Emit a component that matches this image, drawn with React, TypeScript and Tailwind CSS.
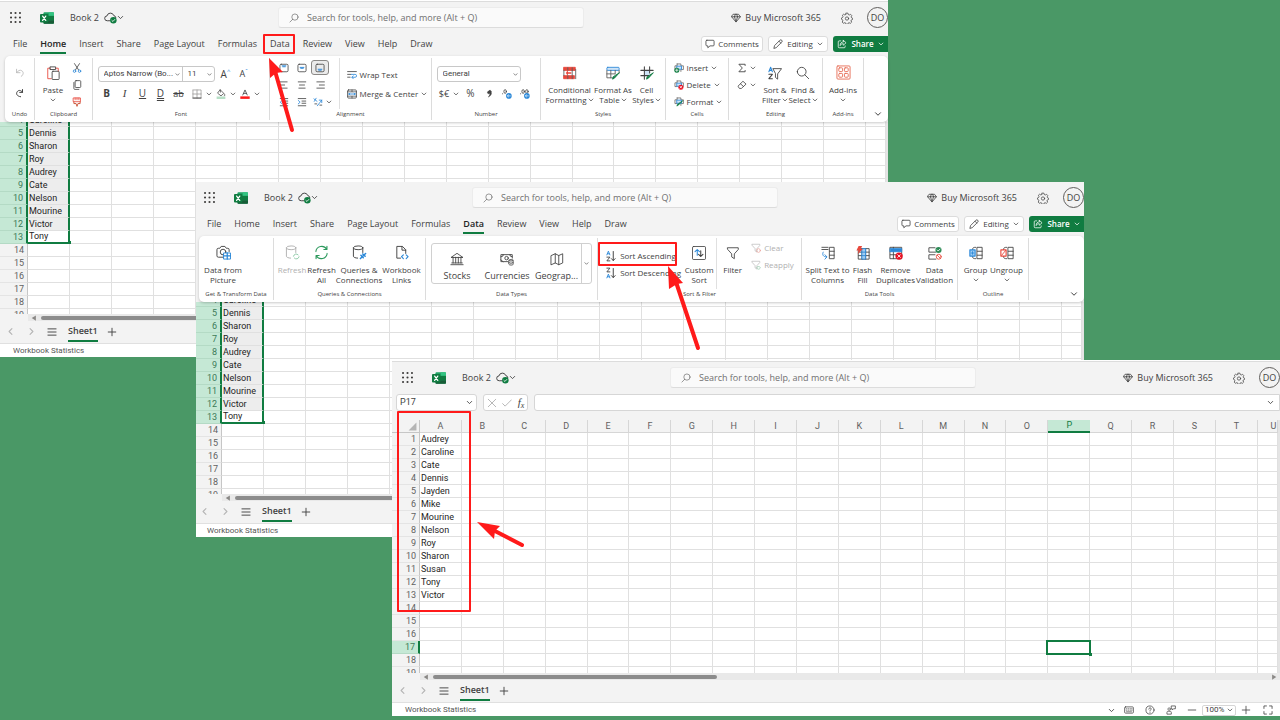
import type { ReactNode } from 'react';

type Props = { children?: ReactNode; className?: string };

/* ---------- icons ---------- */

function Svg({ children, className = 'w-[14px] h-[14px]' }: Props) {
  return (
    <svg
      viewBox="0 0 16 16"
      className={`shrink-0 ${className}`}
      fill="none"
      stroke="currentColor"
      strokeWidth="1"
      strokeLinecap="round"
      strokeLinejoin="round"
      aria-hidden="true"
    >
      {children}
    </svg>
  );
}

const SM = 'w-[10px] h-[10px]';
const MD = 'w-[12px] h-[12px]';
const BLUE = '#2b88d8';
const GREEN = '#107c41';
const RED = '#e8483c';

const Chevron = ({ className = 'w-[6px] h-[6px]' }: Props) => (
  <Svg className={className}>
    <path d="M3 5.5l5 5 5-5" strokeWidth="2" />
  </Svg>
);

const Launcher = () => (
  <Svg className="w-[13px] h-[13px]">
    {[2.5, 8, 13.5].map((y) =>
      [2.5, 8, 13.5].map((x) => <circle key={`${x}-${y}`} cx={x} cy={y} r="1.3" fill="#3b3a39" stroke="none" />)
    )}
  </Svg>
);

const ExcelLogo = () => (
  <Svg className="w-[14px] h-[14px]">
    <g stroke="none">
      <rect x="4" y="1.5" width="12" height="13" rx="1" fill="#21a366" />
      <path d="M4 5.5h12v5H4z" fill="#107c41" />
      <path d="M4 10.5h12v3a1 1 0 01-1 1H5a1 1 0 01-1-1z" fill="#185c37" />
      <path d="M10 1.5h5a1 1 0 011 1v3h-6z" fill="#33c481" />
      <rect x="0" y="3.5" width="9.5" height="9.5" rx="1" fill="#107c41" />
    </g>
    <path d="M3 5.8l3.6 5M6.6 5.8L3 10.8" stroke="#fff" strokeWidth="1.4" />
  </Svg>
);

const Cloud = () => (
  <Svg className="w-[13px] h-[13px]">
    <path d="M7 12H4a3 3 0 01-.3-6 4.3 4.3 0 018.3-.4 3 3 0 012.6 2.6" strokeWidth="1.2" />
    <circle cx="11.5" cy="11.5" r="4" fill={GREEN} stroke="none" />
    <path d="M9.7 11.6l1.3 1.3 2.3-2.5" stroke="#fff" />
  </Svg>
);

const SearchIcon = ({ className = SM }: Props) => (
  <Svg className={className}>
    <circle cx="9.5" cy="6.5" r="5" />
    <path d="M6 10l-4.5 4.5" />
  </Svg>
);

const Diamond = () => (
  <Svg className={SM}>
    <path d="M4 2h8l3 4-7 8.5L1 6zM1 6h14M5.5 6L8 14l2.5-8M5.5 6L7 2M10.5 6L9 2" strokeWidth="1.3" />
  </Svg>
);

const Gear = () => (
  <Svg className={MD}>
    <path d="M6.8 1.5h2.4l.5 1.9 1.3.6 1.8-.9 1.6 1.7-.9 1.7.5 1.2 1.5.6v1.6l-1.7.7-.5 1.2.9 1.7-1.6 1.6-1.8-.8-1.3.5-.5 1.7H6.8l-.5-1.8-1.3-.5-1.8.9-1.6-1.7.9-1.7L2 10.3l-1.5-.7V8l1.700-.7.5-1.200-.9-1.700L3.300 3l1.800.9 1.200-.5z" />
    <circle cx="8" cy="8.7" r="2.2" />
  </Svg>
);

const CommentIcon = () => (
  <Svg className={SM}>
    <path d="M3 2h10a1.5 1.5 0 011.5 1.5v6A1.5 1.5 0 0113 11H8l-3.5 3v-3H3a1.5 1.5 0 01-1.5-1.5v-6A1.5 1.5 0 013 2z" strokeWidth="1.3" />
  </Svg>
);

const Pencil = () => (
  <Svg className={SM}>
    <path d="M1.5 14.5l1-4 8.5-8.5a2 2 0 013 3l-8.5 8.5zM9.5 3.5l3 3" strokeWidth="1.3" />
  </Svg>
);

const ShareIcon = () => (
  <Svg className={SM}>
    <path d="M6 3H3.5A1.5 1.5 0 002 4.5v8A1.5 1.5 0 003.5 14h8a1.5 1.5 0 001.5-1.5V11M10 2l4.5 4L10 10V7.5C7.5 7.5 6 8.5 5 10.5c0-3.5 2-6 5-6z" strokeWidth="1.2" />
  </Svg>
);

const Undo = () => (
  <Svg className={SM}>
    <path d="M2.5 2v5.5H8M2.5 7.5C5 4 8 2.5 11 4.5s3 6-1 9" strokeWidth="1.3" />
  </Svg>
);

const Redo = () => (
  <Svg className={SM}>
    <path d="M12 2.5V7H7.5M12 7C9.5 3 5.5 3 3.5 6s-1 7 5.5 8" strokeWidth="1.6" />
  </Svg>
);

const Clipboard = () => (
  <Svg>
    <path d="M5 2.5H2v12h4M11 2.5h3V6" stroke={RED} />
    <path d="M5 1h6v3H5z" />
    <rect x="7" y="6" width="8" height="9.5" rx="1" />
  </Svg>
);

const Cut = () => (
  <Svg className={SM}>
    <path d="M4 1l6.5 10M12 1L5.5 11" strokeWidth="1.3" />
    <circle cx="4" cy="13" r="2" stroke={BLUE} strokeWidth="1.3" />
    <circle cx="12" cy="13" r="2" stroke={BLUE} strokeWidth="1.3" />
  </Svg>
);

const Copy = () => (
  <Svg className={SM}>
    <rect x="5" y="1" width="9" height="11" rx="1.5" strokeWidth="1.3" />
    <path d="M3 4v9.5A1.5 1.5 0 004.5 15H11" strokeWidth="1.3" />
  </Svg>
);

const Painter = () => (
  <Svg className={SM}>
    <path d="M2.5 1.5h11v6h-11zM5 1.5v3M8 1.5v3M11 1.5v3" stroke={RED} strokeWidth="1.3" />
    <path d="M3 8v2.5h3.5L8 15l1.5-4.5H13V8" stroke="#c43e1c" strokeWidth="1.3" />
  </Svg>
);

const VAlign = ({ at }: { at: number }) => (
  <Svg className={SM}>
    <rect x="1.5" y="2" width="13" height="12" rx="2" strokeWidth="1.3" />
    <path d={`M5 ${at}h6M6 ${at + 1.5}h4`} stroke={BLUE} strokeWidth="1.5" />
  </Svg>
);

const HAlign = ({ d }: { d: string }) => (
  <Svg className={SM}>
    <path d={d} strokeWidth="1.3" />
  </Svg>
);

const Indent = ({ d }: { d: string }) => (
  <Svg className={SM}>
    <path d="M2 2.5h12M8 6.5h6M8 10h6M2 14h12" strokeWidth="1.3" />
    <path d={d} stroke={BLUE} strokeWidth="1.3" />
  </Svg>
);

const Orient = () => (
  <Svg className={SM}>
    <path d="M1.5 3l5 4M5 2L2 7M7 14L14 5M14 9V5h-4" stroke={BLUE} strokeWidth="1.3" />
    <path d="M3 11h3M11 13h3" strokeWidth="1.3" />
  </Svg>
);

const Wrap = () => (
  <Svg className={SM}>
    <path d="M1 2.5h14M1 7h5M1 11.5h4" strokeWidth="1.3" />
    <path d="M7 7h6a2.3 2.3 0 010 4.6H8M10 9.5l-2.2 2.1L10 14" stroke={BLUE} strokeWidth="1.3" />
  </Svg>
);

const Merge = () => (
  <Svg className={SM}>
    <rect x="1" y="1.5" width="14" height="13" rx="1.5" strokeWidth="1.3" />
    <path d="M1 4.5h14M1 11.5h14M8 1.5v3M8 11.5v3" strokeWidth="1.1" />
    <path d="M2.5 8h11M4.5 6.5L3 8l1.5 1.5M11.5 6.5L13 8l-1.5 1.5" stroke={BLUE} strokeWidth="1.4" />
  </Svg>
);

const GridBorders = () => (
  <Svg className={SM}>
    <path d="M1.5 1.5h13v13h-13zM8 1.5v13M1.5 8h13" stroke="#8a8886" strokeDasharray="1.5 1" />
    <path d="M1.5 14.5h13" strokeWidth="1.3" />
  </Svg>
);

const Bucket = () => (
  <Svg className={SM}>
    <path d="M7 1.5l5.5 5.5-4.5 4-5-4zM7 1.5V5M13.5 8c1 1.5 1 3-.3 3" strokeWidth="1.2" />
    <path d="M1 14h14" stroke="#b7dfc6" strokeWidth="4" strokeLinecap="butt" />
  </Svg>
);

const FontColor = () => (
  <Svg className={SM}>
    <path d="M4.5 9.5L8 1.5l3.5 8M5.7 7h4.6" strokeWidth="1.3" />
    <path d="M0.5 13.8h15" stroke="#ff1a1a" strokeWidth="4" strokeLinecap="butt" />
  </Svg>
);

const Decimals = ({ wide }: { wide?: boolean }) => (
  <Svg className={SM}>
    <ellipse cx="5" cy="4" rx="2" ry="3" strokeWidth="1.3" />
    {wide && <ellipse cx="11" cy="4" rx="2" ry="3" strokeWidth="1.3" />}
    <circle cx="1" cy="7.5" r=".8" fill="currentColor" stroke="none" />
    <circle cx="11" cy="11" r="4.5" fill={BLUE} stroke="none" />
    <path d="M8.7 11h4.6M10.5 9.3L8.7 11l1.8 1.7" stroke="#fff" />
  </Svg>
);

const CondFormat = () => (
  <Svg>
    <path d="M1 1.500h13v3.500H1zM1 11h12v3.500H1z" fill={RED} stroke={RED} />
    <path d="M1 5v6M5.500 2v3M10.500 2v3M5.500 11v3.500M10.500 5v9.500M14.500 4v10.500" stroke="#605e5c" />
    <path d="M4 8h5M5 6.500v3" stroke={RED} strokeWidth="1.500" />
  </Svg>
);

const FormatTable = () => (
  <Svg>
    <rect x="1" y="1.5" width="14" height="3.5" rx="1" stroke={BLUE} fill="#cfe4f7" />
    <path d="M1 5v8.5h6M1 9h9M5.5 5v8.5M10.5 5v4M15 5v3" stroke="#605e5c" />
    <path d="M15 8l-5.5 6-2 1 .5-2.2z" stroke={GREEN} fill={GREEN} />
  </Svg>
);

const CellStyles = () => (
  <Svg>
    <path d="M5 5h6v6H5z" fill="#cfe4f7" stroke="none" />
    <path d="M5 1v14M11 1v7M1 5h14M1 11h9" strokeWidth="1.2" />
    <path d="M15 8l-5.5 6-2 1 .5-2.2z" stroke={GREEN} fill={GREEN} />
  </Svg>
);

const CellsIcon = ({ kind }: { kind: 'insert' | 'delete' | 'format' }) => (
  <Svg className={SM}>
    <path d="M5 1.5v3H1.5v6H5M5 1.5h6v3h4v6h-4v3" stroke="#605e5c" strokeWidth="1.2" />
    <path d="M5 5h7v5H5z" stroke={BLUE} fill="#cfe4f7" strokeWidth="1.4" />
    {kind === 'insert' && (
      <>
        <circle cx="4.5" cy="11.5" r="4" fill={GREEN} stroke="none" />
        <path d="M4.5 9.5v4M2.5 11.5h4" stroke="#fff" strokeWidth="1.2" />
      </>
    )}
    {kind === 'delete' && (
      <>
        <circle cx="11" cy="11.5" r="4" fill="#e81123" stroke="none" />
        <path d="M9.5 10l3 3M12.5 10l-3 3" stroke="#fff" strokeWidth="1.2" />
      </>
    )}
    {kind === 'format' && <path d="M14 6l-7 7-2.5 1.5L5.5 12z" fill={GREEN} stroke={GREEN} />}
  </Svg>
);

const Sigma = () => (
  <Svg className={SM}>
    <path d="M13 4V2H3l5.5 6L3 14h10v-2" strokeWidth="1.4" />
  </Svg>
);

const Eraser = () => (
  <Svg className={SM}>
    <path d="M2 9.5L9.5 2l5 4.5-7.5 7H4.5zM5.5 6l5 4.5" strokeWidth="1.3" />
  </Svg>
);

const LetterA = ({ x, y }: { x: number; y: number }) => (
  <path d={`M${x} ${y + 5}l2-5 2 5M${x + 0.8} ${y + 3.5}h2.4`} stroke={BLUE} strokeWidth="1.2" />
);
const LetterZ = ({ x, y }: { x: number; y: number }) => (
  <path d={`M${x} ${y}h4l-4 5h4`} strokeWidth="1.2" />
);

const SortFilter = () => (
  <Svg>
    <LetterA x={1} y={1.5} />
    <LetterZ x={1} y={9.5} />
    <path d="M6 3h9.5L11 9v6l-2.5-2V9z" />
  </Svg>
);

const SortIcon = ({ desc }: { desc?: boolean }) => (
  <Svg className={MD}>
    {desc ? <LetterZ x={2.5} y={1.5} /> : <LetterA x={2.5} y={1.5} />}
    {desc ? <LetterA x={2.5} y={9.5} /> : <LetterZ x={2.5} y={9.5} />}
    <path d="M11 2v12M8.5 11.5L11 14l2.5-2.5" strokeWidth="1.3" />
  </Svg>
);

const AddIns = () => (
  <Svg className="w-[15px] h-[15px]">
    <g stroke="#e8705a">
      <rect x="1" y="1" width="14" height="14" rx="1" />
      <rect x="3" y="3" width="4" height="4" rx=".8" />
      <rect x="9" y="3" width="4" height="4" rx=".8" />
      <rect x="3" y="9" width="4" height="4" rx=".8" />
      <rect x="9" y="9" width="4" height="4" rx=".8" />
    </g>
  </Svg>
);

const Camera = () => (
  <Svg className="w-[15px] h-[15px]">
    <path d="M8 13H2.5A1.5 1.5 0 011 11.5V5a1.5 1.5 0 011.5-1.5H4L5.5 1.5h4l1.5 2h1.5A1.5 1.5 0 0114 5v2" />
    <circle cx="7.5" cy="7.5" r="3" />
    <path d="M8.5 8.5h7v6.5h-7z" fill="#fff" stroke={BLUE} />
    <path d="M8.5 11.5h7M12 8.5V15" stroke={BLUE} strokeWidth="1.3" />
  </Svg>
);

const Database = ({ children }: Props) => (
  <Svg className="w-[15px] h-[15px]">
    <ellipse cx="6.5" cy="3" rx="5" ry="2" />
    <path d="M1.5 3v9c0 1 2 2 4.5 2M11.5 3v5" />
    {children}
  </Svg>
);

const RefreshAll = () => (
  <Svg className="w-[15px] h-[15px]">
    <path d="M2 7a6.2 6.2 0 0111.5-2.5M13.8 1.5v3.3h-3.3M14 9A6.2 6.2 0 012.5 11.5M2.2 14.5v-3.3h3.3" stroke="#2e9a5e" strokeWidth="1.2" />
  </Svg>
);

const FileLink = () => (
  <Svg className="w-[15px] h-[15px]">
    <path d="M7 14H3V1.5h6L12.5 5v4M8.500 1.500V5.500h4" />
    <path d="M10 10.5L8 12.5l2 2M13 10.5l2 2-2 2" stroke={BLUE} strokeWidth="1.2" />
  </Svg>
);

const Bank = () => (
  <Svg>
    <path d="M1.5 6L8 1.5 14.5 6zM1 14.5h14M2 12.5h12M3.5 6v6.5M6.5 6v6.5M9.5 6v6.5M12.5 6v6.5" />
  </Svg>
);

const Money = () => (
  <Svg>
    <path d="M9 11H1V3h13v4M3.5 3v1.5L1 5.5M11.5 3v1.5l2.5 1M1 9l2.5 2" />
    <circle cx="7.5" cy="7" r="2" />
    <path d="M10 9.5c0-1.3 5-1.3 5 0v4.5c0 1.3-5 1.3-5 0zM10 9.5c0 1.2 5 1.2 5 0M10 12c0 1.2 5 1.2 5 0" fill="#fff" />
  </Svg>
);

const MapIcon = () => (
  <Svg>
    <path d="M1.5 4l4.5-2 4 2 4.5-2v10.5L10 14.5l-4-2-4.5 2zM6 2v10.5M10 4v10.5" />
  </Svg>
);

const CustomSort = () => (
  <Svg>
    <rect x="0.5" y="0.5" width="15" height="15" rx="1.5" />
    <path d="M6 10.5V4M3.5 6.5L6 4l2.5 2.5" stroke={BLUE} strokeWidth="1.2" />
    <path d="M10 5.5V12M7.5 9.5L10 12l2.5-2.5" strokeWidth="1.2" />
  </Svg>
);

const Funnel = ({ className, children }: Props) => (
  <Svg className={className}>
    <path d="M2 2h12v2L9.5 9v5.5L6.5 12.5V9L2 4z" />
    {children}
  </Svg>
);

const SplitText = () => (
  <Svg>
    <path d="M1 1.5h7M1 4h7" />
    <path d="M2.5 7c-1.5 3 0 5.5 4 5.5M4.5 10l2.3 2.5L4.5 15" stroke={BLUE} />
    <path d="M10 1.5h5v13h-5zM10 6h5M10 10.5h5" />
  </Svg>
);

const FlashFill = () => (
  <Svg>
    <path d="M3 3h12v12H3zM3 7h12M3 11h12M7 3v12M11 3v12" />
    <path d="M7 3h4v12H7z" fill="#9fcdf2" stroke={BLUE} />
    <path d="M7 7h4M7 11h4" stroke={BLUE} />
    <path d="M3 0h4L5.5 3H8L2 9l1-4H0.5z" fill={RED} stroke="none" />
  </Svg>
);

const RemoveDup = () => (
  <Svg>
    <path d="M1.5 1.5h13v13h-13zM5 1.5v13M1.5 10h13" />
    <path d="M1.5 3h13v3.5h-13z" fill={BLUE} stroke={BLUE} />
    <circle cx="11.5" cy="11.5" r="4.2" fill="#e81123" stroke="none" />
    <path d="M10 10l3 3M13 10l-3 3" stroke="#fff" />
  </Svg>
);

const Validation = () => (
  <Svg>
    <path d="M8 2H1v5h8M8 10H1v5h8" />
    <circle cx="12" cy="4.5" r="3.5" fill="#2e8b57" stroke="none" />
    <path d="M10.5 4.5l1.2 1.2 2-2.2" stroke="#fff" />
    <circle cx="12.3" cy="12.3" r="2.8" stroke={RED} />
    <path d="M10.5 10.5l3.8 3.8" stroke={RED} />
  </Svg>
);

const GroupIcon = ({ undo }: { undo?: boolean }) => (
  <Svg>
    <path d="M9.5 1.5H15v13H9.5zM9.5 6H15M9.5 10.5H15M7.5 1.5C5 1.5 4 2 4 4M7.5 14.5C5 14.5 4 14 4 12" />
    <rect x="1" y="4.5" width="6" height="7" fill={undo ? '#fff' : '#9fcdf2'} stroke={undo ? RED : BLUE} strokeWidth="1.3" />
    {undo ? <path d="M2 10.5l4.5-5.5" stroke={RED} /> : <path d="M4 6.5v3M2.5 8h3" stroke={BLUE} />}
  </Svg>
);

/* ---------- annotations ---------- */

function Arrow({ className, viewBox, head, shaft }: { className: string; viewBox: string; head: string; shaft: string }) {
  return (
    <svg className={`absolute z-30 pointer-events-none ${className}`} viewBox={viewBox} aria-hidden="true">
      <path d={head} fill="#ff1a1a" />
      <path d={shaft} stroke="#ff1a1a" strokeWidth="4" strokeLinecap="round" fill="none" />
    </svg>
  );
}

const Highlight = ({ className }: Props) => (
  <span className={`absolute z-20 border-2 border-[#ff1a1a] rounded-[1px] pointer-events-none ${className}`} />
);

/* ---------- window chrome ---------- */

function TitleBar() {
  return (
    <header className="flex items-center h-[31px] pl-[9px] text-[9px]">
      <div className="flex items-center w-[269px] shrink-0">
        <button aria-label="App launcher"><Launcher /></button>
        <span className="ml-[18px]"><ExcelLogo /></span>
        <span className="ml-4">Book 2</span>
        <span className="ml-[5px]"><Cloud /></span>
        <Chevron className="w-[7px] h-[7px]" />
      </div>
      <label className="flex flex-1 items-center gap-2 max-w-[306px] h-[21px] px-[10px] rounded-[3px] bg-[#fafafa] border border-[#ececec] border-b-[#dcdcdc] text-[#616161]">
        <SearchIcon />
        <input
          aria-label="Search"
          placeholder="Search for tools, help, and more (Alt + Q)"
          className="flex-1 min-w-0 bg-transparent outline-none placeholder:text-[#707070]"
        />
      </label>
      <div className="flex items-center ml-auto pl-4 shrink-0">
        <button className="flex items-center gap-1 whitespace-nowrap"><Diamond /> Buy Microsoft 365</button>
        <button aria-label="Settings" className="ml-5"><Gear /></button>
        <button className="ml-[14px] w-[21px] h-[21px] rounded-full border border-[#605e5c] flex items-center justify-center shrink-0">
          DO
        </button>
      </div>
    </header>
  );
}

const tabs = ['File', 'Home', 'Insert', 'Share', 'Page Layout', 'Formulas', 'Data', 'Review', 'View', 'Help', 'Draw'];

function TabBar({ active, marked }: { active: string; marked?: string }) {
  return (
    <div className="flex items-center h-[23px] pl-[13px] pb-[2px] text-[9px]">
      <nav className="flex items-center gap-[13px]">
        {tabs.map((tab) => (
          <a
            key={tab}
            href="#"
            className={`relative leading-[16px] whitespace-nowrap ${
              tab === active ? 'font-semibold text-[#242424] border-b-2 border-[#107c41] -mb-[2px]' : ''
            }`}
          >
            {tab}
            {tab === marked && <Highlight className="-left-[7px] -right-[5px] -inset-y-[2px]" />}
          </a>
        ))}
      </nav>
      <div className="flex items-center gap-[5px] ml-auto text-[8px]">
        <button className="flex items-center justify-center gap-[3px] w-[62px] h-[16px] rounded-[3px] bg-white border border-[#dcdcdc]">
          <CommentIcon /> Comments
        </button>
        <button className="flex items-center justify-center gap-1 w-[60px] h-[16px] rounded-[3px] bg-white border border-[#dcdcdc]">
          <Pencil /> Editing <Chevron />
        </button>
        <button className="flex items-center justify-center gap-1 w-[55px] h-[16px] rounded-l-[3px] bg-[#107c41] text-white font-semibold">
          <ShareIcon /> Share <Chevron />
        </button>
      </div>
    </div>
  );
}

function Ribbon({ children }: Props) {
  return (
    <div className="relative z-10 flex h-[66px] ml-[5px] py-[2px] bg-white rounded-[5px] shadow-[0_1px_3px_rgba(0,0,0,0.22)] text-[8px]">
      {children}
      <div className="flex flex-1 items-end justify-end p-[6px] pb-[2px]">
        <button aria-label="Collapse ribbon"><Chevron className="w-[8px] h-[8px]" /></button>
      </div>
    </div>
  );
}

function Group({ label, className, children }: Props & { label: string }) {
  return (
    <section className={`flex flex-col shrink-0 border-r border-[#dcdcdc] ${className}`}>
      <div className="flex h-[51px] justify-center">{children}</div>
      <h2 className="leading-[10px] text-[6px] text-center whitespace-nowrap">{label}</h2>
    </section>
  );
}

type BigProps = { icon: ReactNode; lines: string[]; drop?: boolean; dropBelow?: boolean; className?: string };

function BigButton({ icon, lines, drop, dropBelow, className }: BigProps) {
  return (
    <button className={`flex flex-col items-center justify-start pt-[7px] shrink-0 leading-[10px] whitespace-nowrap ${className}`}>
      <span className="flex items-center justify-center h-[15px] mb-[5px]">{icon}</span>
      {lines.map((line, i) => (
        <span key={line} className="flex items-center gap-px">
          {line}
          {drop && i === lines.length - 1 && <Chevron />}
        </span>
      ))}
      {dropBelow && <span className="flex items-center h-[10px]"><Chevron /></span>}
    </button>
  );
}

function RowButton({ icon, label, drop, className = '' }: { icon: ReactNode; label: string; drop?: boolean; className?: string }) {
  return (
    <button className={`flex items-center gap-[3px] leading-[11px] whitespace-nowrap ${className}`}>
      {icon} {label} {drop && <Chevron />}
    </button>
  );
}

function Picker({ label, value, className }: { label: string; value: string; className: string }) {
  return (
    <label className={`relative flex items-center ${className}`}>
      <select aria-label={label} className="appearance-none w-full h-full pl-[5px] bg-transparent outline-none font-[Roboto,sans-serif]">
        <option>{value}</option>
      </select>
      <Chevron className="absolute right-[2px] w-[5px] h-[5px] pointer-events-none" />
    </label>
  );
}

/* ---------- ribbons ---------- */

const IconBtn = ({ label, children, className = 'w-[18px]' }: Props & { label: string }) => (
  <button aria-label={label} className={`flex items-center justify-center h-[15px] shrink-0 ${className}`}>
    {children}
  </button>
);

function HomeRibbon() {
  return (
    <Ribbon>
      <Group label="Undo" className="w-[30px]">
        <div className="flex flex-col gap-[5px] pt-[7px]">
          <IconBtn label="Undo" className="w-[18px] text-[#b5b5b5]"><Undo /></IconBtn>
          <IconBtn label="Redo"><Redo /></IconBtn>
        </div>
      </Group>

      <Group label="Clipboard" className="w-[58px]">
        <BigButton icon={<Clipboard />} lines={['Paste']} dropBelow className="w-[30px]" />
        <div className="flex flex-col gap-[2px] pt-[2px] mr-[3px]">
          <IconBtn label="Cut"><Cut /></IconBtn>
          <IconBtn label="Copy"><Copy /></IconBtn>
          <IconBtn label="Format painter"><Painter /></IconBtn>
        </div>
      </Group>

      <Group label="Font" className="w-[177px]">
        <div className="flex flex-col gap-[4px] pt-[8px] w-[167px]">
          <div className="flex items-center">
            <div className="flex h-[16px] rounded-[3px] border border-[#c8c8c8]">
              <Picker label="Font name" value="Aptos Narrow (Bo..." className="w-[83px]" />
              <Picker label="Font size" value="11" className="w-[32px] border-l border-[#c8c8c8]" />
            </div>
            <IconBtn label="Grow font" className="w-[18px] ml-[2px] text-[10px]">A<sup className="text-[6px] text-[#2b88d8]">^</sup></IconBtn>
            <IconBtn label="Shrink font" className="w-[18px] text-[9px]">A<sup className="text-[6px] text-[#2b88d8]">ˇ</sup></IconBtn>
          </div>
          <div className="flex items-center text-[10px]">
            <IconBtn label="Bold"><b>B</b></IconBtn>
            <IconBtn label="Italic"><i className="font-['Liberation_Serif',serif] text-[11px]">I</i></IconBtn>
            <IconBtn label="Underline"><u>U</u></IconBtn>
            <IconBtn label="Double underline"><span className="underline decoration-double">D</span></IconBtn>
            <IconBtn label="Strikethrough"><s className="text-[9px]">ab</s></IconBtn>
            <IconBtn label="Borders"><GridBorders /></IconBtn>
            <Chevron />
            <IconBtn label="Fill color"><Bucket /></IconBtn>
            <Chevron />
            <IconBtn label="Font color"><FontColor /></IconBtn>
            <Chevron />
          </div>
        </div>
      </Group>

      <Group label="Alignment" className="w-[162px]">
        <div className="grid grid-cols-3 content-start gap-y-[2px] w-[54px] ml-[4px] pt-[2px] shrink-0">
          <IconBtn label="Top align"><VAlign at={4.5} /></IconBtn>
          <IconBtn label="Middle align"><VAlign at={7} /></IconBtn>
          <IconBtn label="Bottom align" className="w-[18px] rounded-[3px] bg-[#ebebeb] border border-[#8a8886]"><VAlign at={10} /></IconBtn>
          <IconBtn label="Align left"><HAlign d="M1 3h12M1 8h8M1 13h12" /></IconBtn>
          <IconBtn label="Align center"><HAlign d="M2 3h12M4 8h8M3 13h10" /></IconBtn>
          <IconBtn label="Align right"><HAlign d="M3 3h12M7 8h8M3 13h12" /></IconBtn>
          <IconBtn label="Decrease indent"><Indent d="M5 5.5L2 8.3l3 2.7" /></IconBtn>
          <IconBtn label="Increase indent"><Indent d="M2 5.5l3 2.8L2 11" /></IconBtn>
          <IconBtn label="Orientation" className="w-[24px] gap-[3px]"><Orient /><Chevron /></IconBtn>
        </div>
        <div className="flex flex-col gap-2 ml-[10px] pl-[7px] pt-[11px] w-[92px] border-l border-[#e0e0e0]">
          <RowButton icon={<Wrap />} label="Wrap Text" />
          <RowButton icon={<Merge />} label="Merge & Center" drop />
        </div>
      </Group>

      <Group label="Number" className="w-[109px]">
        <div className="flex flex-col gap-[4px] pt-[8px] w-[99px]">
          <Picker label="Number format" value="General" className="w-[84px] h-[16px] rounded-[3px] border border-[#c8c8c8]" />
          <div className="flex items-center text-[10px]">
            <IconBtn label="Currency" className="w-[25px] gap-1 text-[9px]">$€<Chevron /></IconBtn>
            <IconBtn label="Percent">%</IconBtn>
            <IconBtn label="Comma style">
              <Svg className={SM}><path d="M7.500 3.500a2 2 0 102 2.500c.3 3-.5 5-2.500 6.500 4-1.500 5.500-5 4.500-7.500a2 2 0 00-4-1.500z" fill="currentColor" /></Svg>
            </IconBtn>
            <IconBtn label="Decrease decimal"><Decimals /></IconBtn>
            <IconBtn label="Increase decimal"><Decimals wide /></IconBtn>
          </div>
        </div>
      </Group>

      <Group label="Styles" className="w-[125px]">
        <BigButton icon={<CondFormat />} lines={['Conditional', 'Formatting']} drop className="w-[49px]" />
        <BigButton icon={<FormatTable />} lines={['Format As', 'Table']} drop className="w-[38px]" />
        <BigButton icon={<CellStyles />} lines={['Cell', 'Styles']} drop className="w-[29px]" />
      </Group>

      <Group label="Cells" className="w-[63px]">
        <div className="flex flex-col gap-[2px] pt-[2px] pl-[2px]">
          <RowButton icon={<CellsIcon kind="insert" />} label="Insert" drop className="h-[15px]" />
          <RowButton icon={<CellsIcon kind="delete" />} label="Delete" drop className="h-[15px]" />
          <RowButton icon={<CellsIcon kind="format" />} label="Format" drop className="h-[15px]" />
        </div>
      </Group>

      <Group label="Editing" className="w-[94px]">
        <div className="flex flex-col gap-[2px] pt-[2px] mr-[3px]">
          <IconBtn label="AutoSum" className="w-[24px] gap-[3px]"><Sigma /><Chevron /></IconBtn>
          <IconBtn label="Clear" className="w-[24px] gap-[3px]"><Eraser /><Chevron /></IconBtn>
        </div>
        <BigButton icon={<SortFilter />} lines={['Sort &', 'Filter']} drop className="w-[28px]" />
        <BigButton icon={<SearchIcon className="w-[14px] h-[14px] -scale-x-100" />} lines={['Find &', 'Select']} drop className="w-[28px]" />
      </Group>

      <Group label="Add-ins" className="w-[41px]">
        <BigButton icon={<AddIns />} lines={['Add-ins']} dropBelow className="w-[36px]" />
      </Group>
    </Ribbon>
  );
}

function DataRibbon() {
  return (
    <Ribbon>
      <Group label="Get & Transform Data" className="w-[75px]">
        <BigButton icon={<Camera />} lines={['Data from', 'Picture']} className="w-[48px] mr-[26px]" />
      </Group>

      <Group label="Queries & Connections" className="w-[152px]">
        <BigButton
          icon={<Database><path d="M9 12a3 3 0 015-1.5M15 12.5a3 3 0 01-5 1.5" stroke="#8cc9a5" /></Database>}
          lines={['Refresh']}
          className="w-[29px] text-[#b0b0b0]"
        />
        <BigButton icon={<RefreshAll />} lines={['Refresh', 'All']} className="w-[30px]" />
        <BigButton
          icon={<Database><path d="M9 14.5l5.5-5.5M9.5 11l2.5 2.5M11.5 9.5L14 12" stroke={BLUE} strokeWidth="1.6" /></Database>}
          lines={['Queries &', 'Connections']}
          className="w-[45px]"
        />
        <BigButton icon={<FileLink />} lines={['Workbook', 'Links']} className="w-[40px]" />
      </Group>

      <Group label="Data Types" className="w-[172px]">
        <div className="flex h-[41px] mt-[5px] w-[161px] rounded-[3px] border border-[#d0d0d0] text-[9px]">
          <BigButton icon={<Bank />} lines={['Stocks']} className="w-[50px]" />
          <BigButton icon={<Money />} lines={['Currencies']} className="w-[50px]" />
          <BigButton icon={<MapIcon />} lines={['Geograp...']} className="w-[49px]" />
          <button aria-label="More data types" className="flex flex-1 items-center justify-center border-l border-[#d0d0d0]">
            <Chevron className="w-[5px] h-[5px]" />
          </button>
        </div>
      </Group>

      <Group label="Sort & Filter" className="w-[204px]">
        <div className="relative flex flex-col gap-[2px] pt-[10px] w-[78px]">
          <RowButton icon={<SortIcon />} label="Sort Ascending" className="h-[15px]" />
          <RowButton icon={<SortIcon desc />} label="Sort Descending" className="h-[15px]" />
          <Highlight className="-left-[7px] top-[4px] w-[79px] h-[24px]" />
        </div>
        <BigButton icon={<CustomSort />} lines={['Custom', 'Sort']} className="w-[32px]" />
        <BigButton icon={<Funnel />} lines={['Filter']} className="w-[32px] ml-[1px] border-l border-[#e0e0e0]" />
        <div className="flex flex-col gap-[2px] pt-[2px] ml-[3px] text-[#b0b0b0]">
          <RowButton
            icon={<Funnel className={SM}><circle cx="12" cy="12" r="3" stroke="#e99a92" /></Funnel>}
            label="Clear"
            className="h-[15px]"
          />
          <RowButton
            icon={<Funnel className={SM}><path d="M9 12a3 3 0 015-1M15 12a3 3 0 01-5 2" stroke="#8cc9a5" /></Funnel>}
            label="Reapply"
            className="h-[15px]"
          />
        </div>
      </Group>

      <Group label="Data Tools" className="w-[156px]">
        <BigButton icon={<SplitText />} lines={['Split Text to', 'Columns']} className="w-[44px]" />
        <BigButton icon={<FlashFill />} lines={['Flash', 'Fill']} className="w-[26px]" />
        <BigButton icon={<RemoveDup />} lines={['Remove', 'Duplicates']} className="w-[40px]" />
        <BigButton icon={<Validation />} lines={['Data', 'Validation']} className="w-[38px]" />
      </Group>

      <Group label="Outline" className="w-[71px]">
        <BigButton icon={<GroupIcon />} lines={['Group']} dropBelow className="w-[27px]" />
        <BigButton icon={<GroupIcon undo />} lines={['Ungroup']} dropBelow className="w-[35px]" />
      </Group>
    </Ribbon>
  );
}

function FormulaBar() {
  return (
    <div className="flex items-stretch gap-[6px] h-[20px] mb-[7px] pl-[4px] pt-[1px] pb-[2px] text-[9px] font-[Roboto,sans-serif]">
      <label className="flex items-center w-[81px] px-[3px] bg-white rounded-[3px] border border-[#d6d6d6]">
        <input aria-label="Name box" defaultValue="P17" className="flex-1 min-w-0 outline-none" />
        <Chevron className="w-[7px] h-[7px]" />
      </label>
      <div className="flex items-center justify-around w-[45px] bg-white rounded-[3px] border border-[#d6d6d6]">
        <button aria-label="Cancel" className="text-[#a8a8a8]"><Svg className={SM}><path d="M2 2l12 12M14 2L2 14" strokeWidth="1.3" /></Svg></button>
        <button aria-label="Enter" className="text-[#a8a8a8]"><Svg className={SM}><path d="M1 9l4 4L15 3" strokeWidth="1.3" /></Svg></button>
        <button aria-label="Insert function" className="italic text-[11px] leading-none font-['Liberation_Serif',serif]">
          f<sub className="text-[8px]">x</sub>
        </button>
      </div>
      <label className="flex flex-1 items-center pr-[5px] bg-white rounded-l-[3px] border border-[#d6d6d6]">
        <input aria-label="Formula bar" className="flex-1 min-w-0 outline-none" />
        <Chevron className="w-[7px] h-[7px]" />
      </label>
    </div>
  );
}

/* ---------- sheet ---------- */

const columns = 'ABCDEFGHIJKLMNOPQRSTU'.split('');

type SheetProps = {
  first: number;
  values: string[];
  headers?: boolean;
  selected?: boolean;
  cursor?: { col: string; row: number };
  className: string;
};

function Sheet({ first, values, headers, selected, cursor, className }: SheetProps) {
  const rows = Array.from({ length: 20 - first }, (_, i) => first + i);
  const last = first + values.length - 1;
  return (
    <div className={`overflow-hidden bg-white border-r-2 border-[#e4e4e4] ${className}`}>
      {/* without headers the sheet is scrolled part of a row */}
      <table
        className={`w-full table-fixed border-separate border-spacing-0 text-[9px] leading-[11px] font-[Roboto,sans-serif] ${
          headers ? '' : '-mt-[8px]'
        }`}
      >
        <colgroup>
          <col className="w-[28px]" />
          {columns.map((c) => <col key={c} className={c === 'U' ? 'w-[20px]' : ''} />)}
        </colgroup>
        {headers && (
          <thead>
            <tr className="bg-[#f3f3f3] text-[#616161]">
              <th className="h-[13px] p-0 border-r border-b border-[#c6c6c6]">
                <Svg className="w-[9px] h-[9px] ml-auto mr-[2px]"><path d="M15 1v14H1z" fill="#b5b5b5" stroke="none" /></Svg>
              </th>
              {columns.map((c) => (
                <th
                  key={c}
                  className={`h-[13px] p-0 font-normal overflow-hidden ${
                    cursor?.col === c
                      ? 'bg-[#c5e8d5] text-[#107c41] border-b-2 border-[#107c41]'
                      : 'border-b border-r border-[#d6d6d6]'
                  } ${c === 'U' ? 'pl-3' : ''}`}
                >
                  {c}
                </th>
              ))}
            </tr>
          </thead>
        )}
        <tbody>
          {rows.map((row) => {
            const marked = (selected && row <= last) || cursor?.row === row;
            return (
              <tr key={row}>
                <th
                  className={`h-[13px] p-0 pr-[3px] font-normal text-right border-b ${
                    marked
                      ? 'bg-[#c5e8d5] text-[#3c7a58] border-b-[#b4dac5] border-r-2 border-r-[#107c41]'
                      : 'bg-[#f3f3f3] text-[#616161] border-b-[#e4e4e4] border-r border-r-[#c6c6c6]'
                  }`}
                >
                  {row}
                </th>
                {columns.map((c) => {
                  const inRange = c === 'A' && selected && row <= last;
                  const isCursor = cursor?.col === c && cursor.row === row;
                  return (
                    <td
                      key={c}
                      className={`relative h-[13px] p-0 pl-px whitespace-nowrap text-[#242424] ${
                        inRange ? 'border-r-2 border-r-[#107c41]' : 'border-r border-r-[#e0e0e0]'
                      } ${inRange && row < last ? 'bg-[#ededed]' : ''} ${
                        inRange && row === last ? 'border-b-2 border-b-[#107c41]' : 'border-b border-b-[#e0e0e0]'
                      }`}
                    >
                      {c === 'A' && values[row - first]}
                      {inRange && row === last && <span className="absolute z-10 -right-[3px] -bottom-[2px] w-[3px] h-[3px] bg-[#107c41]" />}
                      {isCursor && (
                        <span className="absolute z-10 -left-[2px] -right-[2px] -top-[1px] -bottom-[2px] border-2 border-[#107c41]">
                          <span className="absolute -right-[3px] -bottom-[3px] w-[3px] h-[3px] bg-[#107c41]" />
                        </span>
                      )}
                    </td>
                  );
                })}
              </tr>
            );
          })}
        </tbody>
      </table>
    </div>
  );
}

function SheetFooter({ controls }: { controls?: boolean }) {
  return (
    <footer>
      <div className="flex items-center h-[7px] ml-[28px] px-[3px] gap-[4px] bg-[#e9e9e9] text-[#8a8886]">
        <Svg className="w-[6px] h-[6px]"><path d="M13 1v14L2 8z" fill="currentColor" stroke="none" /></Svg>
        <div className="flex-1"><div className="w-[34%] h-[4px] rounded-full bg-[#8c8c8c]" /></div>
        <Svg className="w-[6px] h-[6px]"><path d="M3 1v14l11-7z" fill="currentColor" stroke="none" /></Svg>
      </div>
      <div className="flex items-center h-[22px] pl-[6px] pb-px text-[9px]">
        <button aria-label="Previous sheet" className="text-[#b5b5b5]"><Chevron className="w-[9px] h-[9px] rotate-90" /></button>
        <button aria-label="Next sheet" className="ml-3 text-[#b5b5b5]"><Chevron className="w-[9px] h-[9px] -rotate-90" /></button>
        <button aria-label="All sheets" className="ml-[11px]"><Svg className={SM}><path d="M1.5 3h13M1.5 8h13M1.5 13h13" strokeWidth="1.5" /></Svg></button>
        <button className="ml-[11px] h-full font-semibold border-b-2 border-[#107c41]">Sheet1</button>
        <button aria-label="Add sheet" className="ml-[9px]"><Svg className={SM}><path d="M8 2v12M2 8h12" strokeWidth="1.5" /></Svg></button>
      </div>
      <div className="flex items-center h-[14px] pl-[13px] pr-[7px] pt-px bg-white border-t border-[#e0e0e0] text-[8px] text-[#555] font-[Roboto,sans-serif]">
        <span>Workbook Statistics</span>
        {controls && (
          <div className="flex items-center ml-auto text-[#424242]">
            <Chevron className="w-[7px] h-[7px]" />
            <button aria-label="Keyboard" className="ml-[9px]">
              <Svg className={SM}><rect x="1" y="3" width="14" height="10" rx="1.5" strokeWidth="1.2" /><path d="M3.5 6h1M6.5 6h1M9.5 6h1M12 6h1M3.5 8.3h1M6.5 8.3h1M9.5 8.3h1M12 8.3h1M4 10.8h8" /></Svg>
            </button>
            <button aria-label="Help" className="ml-[11px]">
              <Svg className={SM}><circle cx="8" cy="8" r="6.5" strokeWidth="1.2" /><path d="M6 6.5c0-2.5 4-2.5 4-.3C10 7.5 8 7.7 8 9.3M8 11.5v.2" strokeWidth="1.3" /></Svg>
            </button>
            <button aria-label="Feedback" className="ml-[11px]">
              <Svg className={SM}><circle cx="5" cy="6.5" r="2" /><path d="M1.5 14v-2c0-1.5 1-2 2-2h3c1 0 2 .5 2 2v2zM9 1.5h6v4.5h-3l-2 2V6H9z" strokeWidth="1.2" /></Svg>
            </button>
            <button aria-label="Zoom out" className="ml-[11px]"><Svg className={SM}><path d="M2 8h12" strokeWidth="1.3" /></Svg></button>
            <label className="relative flex items-center ml-[5px] w-[34px] h-[11px] rounded-[2px] border border-[#d6d6d6]">
              <select aria-label="Zoom level" className="appearance-none w-full pl-[2px] bg-transparent outline-none">
                <option>100%</option>
              </select>
              <Chevron className="absolute right-[2px] w-[6px] h-[6px] pointer-events-none" />
            </label>
            <button aria-label="Zoom in" className="ml-[5px]"><Svg className={SM}><path d="M8 2v12M2 8h12" strokeWidth="1.3" /></Svg></button>
            <button aria-label="Full screen" className="ml-3"><Svg className={SM}><path d="M1.5 5.5v-4h4M10.5 1.5h4v4M14.5 10.5v4h-4M5.5 14.5h-4v-4" strokeWidth="1.3" /></Svg></button>
          </div>
        )}
      </div>
    </footer>
  );
}

const Window = ({ className, children }: Props) => (
  <section className={`absolute bg-[#f3f3f3] ${className}`}>{children}</section>
);

const unsorted = ['Caroline', 'Dennis', 'Sharon', 'Roy', 'Audrey', 'Cate', 'Nelson', 'Mourine', 'Victor', 'Tony'];
const sorted = [
  'Audrey', 'Caroline', 'Cate', 'Dennis', 'Jayden', 'Mike', 'Mourine',
  'Nelson', 'Roy', 'Sharon', 'Susan', 'Tony', 'Victor',
];

export default function App() {
  return (
    <main className="relative min-h-screen overflow-hidden bg-[#4a9866] text-[#424242] font-['Open_Sans','Noto_Sans',sans-serif]">
      {/* Step 1: open the Data tab */}
      <Window className="left-0 right-[392px] top-0">
        <div className="h-[2px] bg-white border-b border-[#dcdcdc]" />
        <TitleBar />
        <TabBar active="Home" marked="Data" />
        <HomeRibbon />
        <Sheet first={4} values={unsorted} selected className="h-[192px]" />
        <SheetFooter />
        <Arrow
          className="left-[264px] top-[56px] w-[32px] h-[80px]"
          viewBox="0 0 32 80"
          head="M5 2l14 14-7 1-6 5z"
          shaft="M11 15l17 59"
        />
      </Window>

      {/* Step 2: sort ascending, the window's left edge is cropped */}
      <Window className="left-[196px] right-[196px] top-[182px] overflow-hidden">
        <div className="-ml-[2px]">
          <TitleBar />
          <TabBar active="Data" />
          <DataRibbon />
          <Sheet first={4} values={unsorted} selected className="h-[192px]" />
          <SheetFooter />
        </div>
        <Arrow
          className="left-[468px] top-[80px] w-[40px] h-[92px]"
          viewBox="0 0 40 92"
          head="M4 4l15 17-6 1-8 5z"
          shaft="M12 20l22 66"
        />
      </Window>

      {/* Result */}
      <Window className="left-[392px] right-0 top-[360px]">
        <div className="h-[2px] bg-white border-b border-[#dcdcdc]" />
        <TitleBar />
        <FormulaBar />
        <Sheet first={1} values={sorted} headers cursor={{ col: 'P', row: 17 }} className="h-[253px]" />
        <SheetFooter controls />
        <Highlight className="left-[5px] top-[51px] w-[74px] h-[201px]" />
        <Arrow
          className="left-[82px] top-[156px] w-[56px] h-[36px]"
          viewBox="0 0 56 36"
          head="M3 6l23 4-5 5-1 8z"
          shaft="M19 14l29 15"
        />
      </Window>
    </main>
  );
}
